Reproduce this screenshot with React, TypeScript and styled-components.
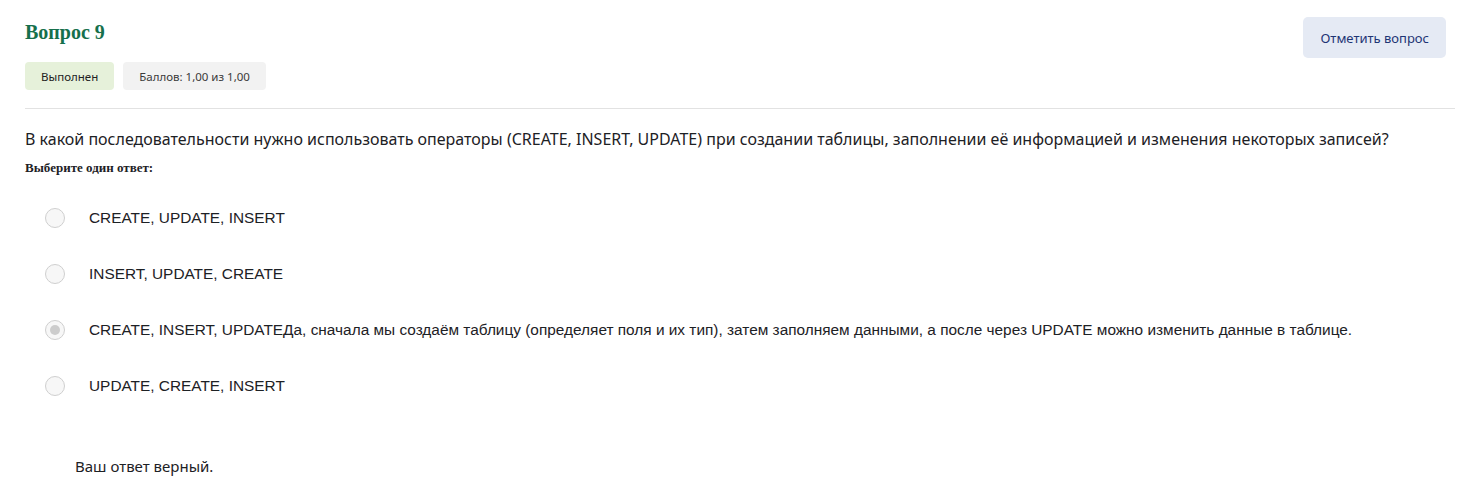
import styled, { createGlobalStyle } from "styled-components";

const GlobalStyle = createGlobalStyle`
  html, body {
    margin: 0;
    padding: 0;
    background: #ffffff;
  }
  body {
    font-family: "Noto Sans", "Open Sans", sans-serif;
    color: #1d2125;
  }
`;

const Page = styled.div`
  padding: 17px 21px 0 25px;
  width: 1430px;
`;

const Header = styled.div`
  display: flex;
  justify-content: space-between;
  align-items: flex-start;
  padding-bottom: 18px;
  border-bottom: 1px solid #e2e2e2;
`;

const HeaderLeft = styled.div`
  display: flex;
  flex-direction: column;
`;

const Title = styled.h3`
  margin: 3px 0 0 0;
  font-family: "Liberation Serif", serif;
  font-weight: 700;
  font-size: 20px;
  line-height: 24px;
  color: #16704c;
`;

const Badges = styled.div`
  display: flex;
  gap: 9px;
  margin-top: 18px;
`;

const Badge = styled.span<{ $tone: "done" | "grade" }>`
  display: inline-flex;
  align-items: center;
  height: 28px;
  padding: 0 16px;
  border-radius: 4px;
  font-size: 11.5px;
  color: ${(p) => (p.$tone === "done" ? "#222" : "#3a3a3a")};
  background: ${(p) => (p.$tone === "done" ? "#e6f1da" : "#f2f2f2")};
`;

const FlagButton = styled.button`
  border: none;
  border-radius: 5px;
  background: #e5eaf4;
  color: #1e3574;
  font-family: "Noto Sans", sans-serif;
  font-size: 13px;
  height: 41px;
  padding: 0 17px;
  margin-right: 9px;
  cursor: pointer;
`;

const QuestionText = styled.p`
  margin: 19px 0 0 0;
  font-size: 16px;
  line-height: 22px;
  color: #1d2125;
`;

const Prompt = styled.div`
  margin-top: 10px;
  font-family: "Liberation Serif", serif;
  font-weight: 700;
  font-size: 13px;
  line-height: 16px;
  color: #1d2125;
`;

const Options = styled.div`
  display: flex;
  flex-direction: column;
  margin-top: 14px;
`;

const Option = styled.label`
  display: flex;
  align-items: center;
  height: 56px;
  padding-left: 20px;
  font-family: "Liberation Sans", sans-serif;
  font-size: 15.4px;
  color: #1d2125;
`;

const Radio = styled.span<{ $checked?: boolean }>`
  position: relative;
  width: 18px;
  height: 18px;
  border-radius: 50%;
  border: 1px solid #cfcfcf;
  background: #f7f7f7;
  margin-right: 24px;
  flex-shrink: 0;
  &::after {
    content: "";
    display: ${(p) => (p.$checked ? "block" : "none")};
    position: absolute;
    left: 4px;
    top: 4px;
    width: 10px;
    height: 10px;
    border-radius: 50%;
    background: #cccccc;
  }
`;

const Feedback = styled.div`
  margin-top: 41px;
  padding-left: 50px;
  font-size: 15px;
  line-height: 22px;
  color: #1d2125;
`;

const options = [
  { text: "CREATE, UPDATE, INSERT", checked: false },
  { text: "INSERT, UPDATE, CREATE", checked: false },
  {
    text:
      "CREATE, INSERT, UPDATEДа, сначала мы создаём таблицу (определяет поля и их тип), затем заполняем данными, а после через UPDATE можно изменить данные в таблице.",
    checked: true,
  },
  { text: "UPDATE, CREATE, INSERT", checked: false },
];

export default function App() {
  return (
    <>
      <GlobalStyle />
      <Page>
        <Header>
          <HeaderLeft>
            <Title>Вопрос 9</Title>
            <Badges>
              <Badge $tone="done">Выполнен</Badge>
              <Badge $tone="grade">Баллов: 1,00 из 1,00</Badge>
            </Badges>
          </HeaderLeft>
          <FlagButton>Отметить вопрос</FlagButton>
        </Header>
        <QuestionText>
          В какой последовательности нужно использовать операторы (CREATE, INSERT, UPDATE) при создании таблицы,
          заполнении её информацией и изменения некоторых записей?
        </QuestionText>
        <Prompt>Выберите один ответ:</Prompt>
        <Options>
          {options.map((o) => (
            <Option key={o.text}>
              <Radio $checked={o.checked} />
              {o.text}
            </Option>
          ))}
        </Options>
        <Feedback>Ваш ответ верный.</Feedback>
      </Page>
    </>
  );
}
